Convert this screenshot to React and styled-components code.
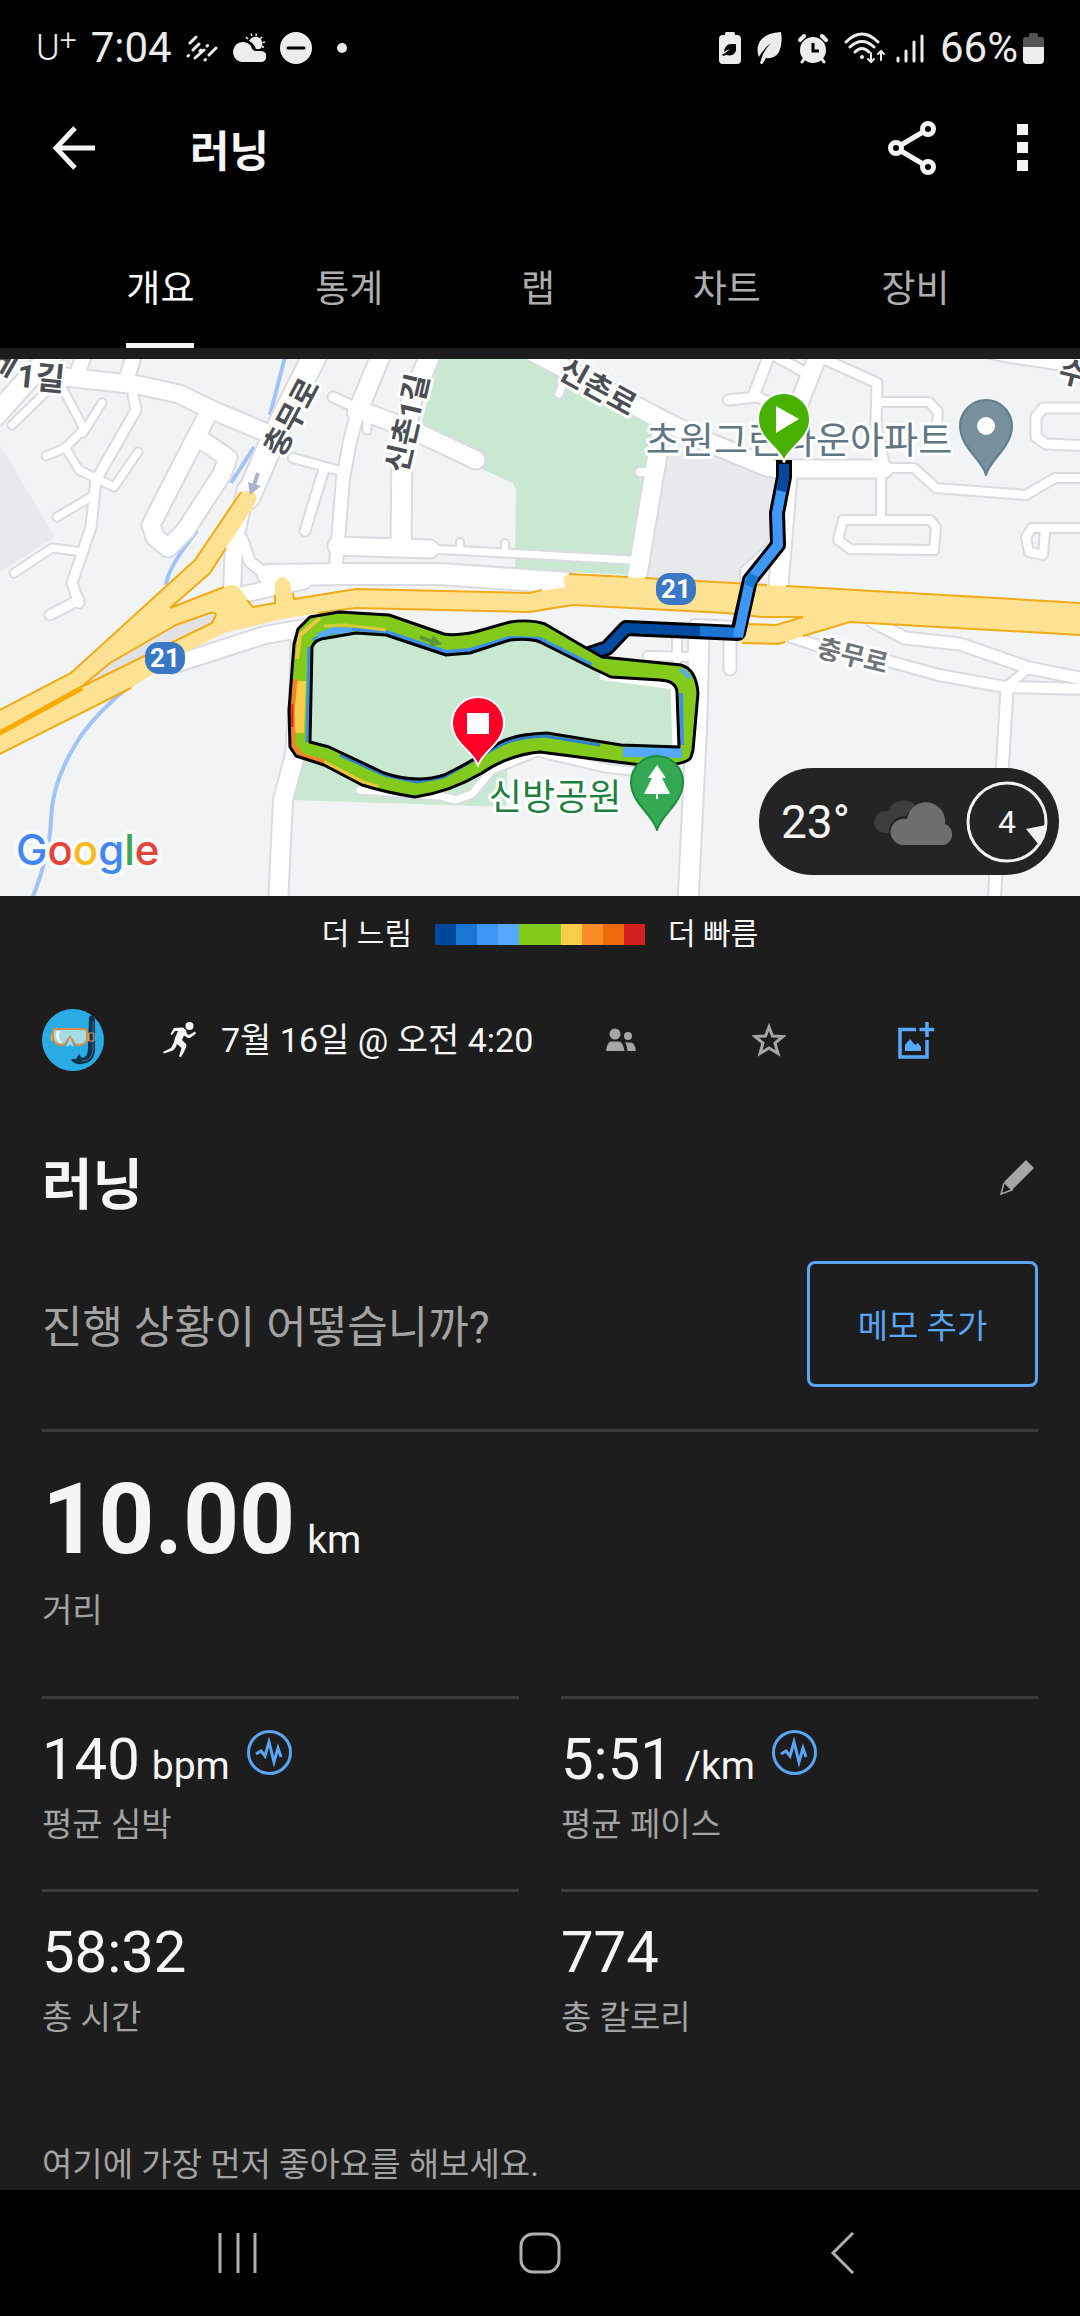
import styled, { createGlobalStyle } from 'styled-components'

const GlobalStyle = createGlobalStyle`
* {
  box-sizing: border-box;
}
body {
  margin: 0;
  background: #000;
  color: #f5f5f5;
  font-family: Roboto, 'Noto Sans CJK KR', sans-serif;
}
button {
  background: none;
  border: 0;
  padding: 0;
  color: inherit;
  font: inherit;
  cursor: pointer;
}
h1, h2, p {
  margin: 0;
}
svg {
  display: block;
}
`

const Page = styled.div`
background: #1d1d1d;
`
const Header = styled.header`
background: #000;
margin-bottom: 11px;
`
const StatusBar = styled.div`
display: flex;
align-items: center;
justify-content: space-between;
height: 96px;
padding: 0 36px;
color: #ececec;
`
const StatusGroup = styled.div`
display: flex;
align-items: center;
gap: ${({ $gap }) => $gap}px;
`
const Carrier = styled.span`
font-size: 36px;
font-weight: 300;
line-height: 44px;
& sup {
  font-size: 30px;
  line-height: 0;
  vertical-align: 10px;
}
`
const StatusText = styled.span`
font-size: 42px;
line-height: 44px;
`

const AppBar = styled.div`
display: flex;
align-items: center;
height: 104px;
padding: 0 42px;
`
const IconButton = styled.button`
display: flex;
align-items: center;
justify-content: center;
width: 64px;
height: 64px;
color: ${({ $color }) => $color || '#f5f5f5'};
`
const AppTitle = styled.h1`
flex: 1;
margin-left: 84px;
padding-top: 8px;
font-size: 43px;
font-weight: 700;
line-height: 56px;
`
const AppActions = styled.div`
display: flex;
gap: 46px;
margin-right: -16px;
`

const Tabs = styled.div`
display: flex;
align-items: flex-end;
height: 148px;
padding: 0 70px 0 66px;
`
const TabCell = styled.div`
flex: 1;
display: flex;
justify-content: center;
`
const Tab = styled.button`
padding-bottom: 28px;
border-bottom: 5px solid ${({ $active }) => ($active ? '#f5f5f5' : 'transparent')};
color: ${({ $active }) => ($active ? '#ffffff' : '#aeaeae')};
font-size: 37px;
line-height: 50px;
`

const MapBox = styled.section`
position: relative;
& > svg {
  width: 100%;
  height: auto;
}
`
const Weather = styled.div`
position: absolute;
right: 21px;
bottom: 21px;
display: flex;
align-items: center;
width: 300px;
height: 107px;
padding: 0 11px 0 22px;
border-radius: 54px;
background: #242424;
`
const Temperature = styled.span`
flex: 1;
font-size: 46px;
line-height: 56px;
`

const Legend = styled.div`
display: flex;
align-items: center;
justify-content: center;
gap: 23px;
height: 76px;
font-size: 30px;
line-height: 40px;
`
const Scale = styled.div`
display: flex;
`
const Swatch = styled.i`
width: 21px;
height: 21px;
background: ${({ $color }) => $color};
`

const Meta = styled.div`
display: flex;
align-items: center;
height: 136px;
padding: 0 90px 0 42px;
`
const Runner = styled.span`
margin: 0 24px 0 59px;
`
const DateText = styled.span`
font-size: 34px;
line-height: 44px;
white-space: nowrap;
`
const MetaActions = styled.div`
display: flex;
flex: 1;
justify-content: space-around;
margin-left: 14px;
`

const TitleRow = styled.div`
display: flex;
align-items: center;
justify-content: space-between;
height: 140px;
padding: 0 31px 0 42px;
`
const Title = styled.h2`
padding-top: 14px;
font-size: 55px;
font-weight: 700;
line-height: 64px;
`
const NoteRow = styled.div`
display: flex;
align-items: center;
justify-content: space-between;
padding: 13px 42px 42px;
`
const Question = styled.p`
padding-top: 8px;
color: #a3a3a3;
font-size: 44px;
line-height: 56px;
`
const NoteButton = styled.button`
width: 231px;
height: 126px;
border: 3px solid #5aa5f5;
border-radius: 8px;
color: #5aa5f5;
font-size: 33px;
`

const Stats = styled.section`
display: grid;
grid-template-columns: 1fr 1fr;
column-gap: 42px;
padding: 0 42px;
`
const Stat = styled.div`
grid-column: ${({ $wide }) => ($wide ? '1 / -1' : 'auto')};
padding: ${({ $wide }) => ($wide ? '28px 0 63px' : '25px 0 42px')};
border-top: 3px solid #3d3d3d;
`
const Value = styled.div`
display: flex;
align-items: baseline;
gap: 12px;
height: ${({ $wide }) => ($wide ? 120 : 70)}px;
font-size: ${({ $wide }) => ($wide ? 98 : 58)}px;
font-weight: ${({ $wide }) => ($wide ? 700 : 400)};
line-height: ${({ $wide }) => ($wide ? 120 : 70)}px;
`
const Unit = styled.span`
font-size: 39px;
font-weight: 400;
line-height: 48px;
`
const ChartButton = styled.button`
align-self: flex-start;
margin: 6px 0 0 5px;
color: #5aa5f5;
`
const Label = styled.div`
margin-top: 9px;
color: #a3a3a3;
font-size: 33px;
line-height: 44px;
`
const LikeHint = styled.p`
padding: 61px 42px 3px;
color: #a3a3a3;
font-size: 33px;
line-height: 44px;
`

const NavBar = styled.nav`
display: flex;
align-items: center;
height: 126px;
padding: 0 87px;
background: #000;
`
const NavButton = styled.button`
display: flex;
flex: 1;
justify-content: center;
color: #b0b0b0;
`

const tabs = ['개요', '통계', '랩', '차트', '장비']

const scale = [
  '#00489c', '#1976d2', '#3f97f5', '#56a9ff', '#82cb1d',
  '#82cb1d', '#fbcb4a', '#fb8c26', '#ec6a0e', '#d32121'
]

const stats = [
  { value: '10.00', unit: 'km', label: '거리', wide: true },
  { value: '140', unit: 'bpm', label: '평균 심박', chart: true },
  { value: '5:51', unit: '/km', label: '평균 페이스', chart: true },
  { value: '58:32', label: '총 시간' },
  { value: '774', label: '총 칼로리' }
]

// [width, path]
const roads = [
  [17, 'M65 18 L138 26 L179 35 L210 50 L262 72'],
  [20, 'M56 -8 L30 18 L-6 58'],
  [7, 'M45 34 L12 66'],
  [14, 'M84 -4 L76 18'],
  [14, 'M134 -4 L126 22'],
  [23, 'M316 -6 L284 58 L268 92 L248 138'],
  [16, 'M246 130 L234 184 L232 232'],
  [10, 'M242 180 L250 203 L264 214 L300 216'],
  [20, 'M268 216 L344 215 L440 215 L540 222 L570 224'],
  [15, 'M241 236 L304 222'],
  [17, 'M208 55 L196 78 L151 166 L155 178 L168 189 L185 172 L222 115 L228 99 L203 82'],
  [7, 'M62 28 L84 70 L65 89 L46 97'],
  [7, 'M102 44 L83 74'],
  [9, 'M133 36 L136 51 L96 121 L91 168 L72 224 L79 244'],
  [7, 'M65 88 L79 111 L114 128 L138 93'],
  [7, 'M91 138 L57 158'],
  [7, 'M83 193 L52 189 L14 214'],
  [9, 'M79 241 L50 256'],
  [18, 'M381 -4 L357 54'],
  [12, 'M357 56 L350 82 L343 120 L336 206'],
  [9, 'M333 38 L368 54'],
  [17, 'M362 52 L410 70 L476 101'],
  [19, 'M430 -4 L412 40 L402 90 L401 188'],
  [7, 'M367 60 L367 71'],
  [8, 'M293 99 L344 113'],
  [9, 'M324 110 L305 172'],
  [17, 'M337 187 L430 190'],
  [7, 'M430 190 L540 196 L630 201'],
  [6, 'M460 183 L460 192'],
  [6, 'M505 184 L505 193'],
  [18, 'M516 -16 L600 28 L660 60 L700 80 L768 108'],
  [17, 'M775 110 L884 110'],
  [8, 'M884 109 L914 109 L936 129 L1026 136 L1055 119 L1090 119'],
  [7, 'M559 35 L567 14'],
  [8, 'M640 113 L655 113'],
  [18, 'M660 80 L636 224'],
  [18, 'M788 112 L778 232'],
  [8, 'M746 230 L745 212 L778 182'],
  [17, 'M819 -6 L793 60'],
  [10, 'M770 -6 L754 36'],
  [9, 'M728 41 L757 38 L776 46'],
  [9, 'M774 -4 L804 13'],
  [9, 'M824 0 L877 24 L876 64 L884 105'],
  [8, 'M877 43 L929 43 L938 53 L936 76'],
  [8, 'M881 112 L881 161'],
  [8, 'M843 161 L930 161 L936 168 L934 191 L850 190 L838 181 Z'],
  [9, 'M1090 49 L1043 49 L1036 58 L1036 78 L1046 85 L1090 87'],
  [14, 'M950 -16 L1010 -4 L1090 8'],
  [8, 'M1090 169 L1032 169 L1026 178 L1029 193 L1043 196 L1045 171'],
  [10, 'M780 274 L822 288 L884 301 L939 316 L1005 328 L1090 330'],
  [11, 'M872 262 L905 279 L960 285 L1029 309 L1090 321'],
  [8, 'M1028 310 L1008 326'],
  [11, 'M1007 331 L994 545'],
  [10, 'M695 266 L735 268'],
  [8, 'M677 274 L677 300'],
  [8, 'M648 297 L692 298'],
  [11, 'M730 276 L730 310'],
  [19, 'M699 272 L697 358 L688 545'],
  [7, 'M360 431 L440 437 L456 441 L472 435 L492 411 L537 393 L605 409 L640 413'],
  [18, 'M301 272 L299 340 L295 396 L283 441 L278 545'],
  [16, 'M172 306 L265 276 L345 262']
]

const loopOuter =
  'M339 253 L310 258 L298 270 L294 285 L289 351 L290 388 L296 397 L324 406 L362 426 Q388 434 415 438 Q450 433 482 414 Q508 396 540 393 L617 403 L650 407 Q688 406 691 398 L693 391 L698 334 Q696 310 681 306 L602 298 L581 286 L545 265 Q530 260 510 263 L475 273 Q455 277 444 275 L389 256 Z'
const loopInner =
  'M312 288 Q315 280 327 279 L356 274 L386 276 L446 296 L470 294 L510 281 Q530 279 540 283 L592 309 L611 318 L660 321 Q677 322 677 334 L679 388 L621 386 L547 374 Q515 375 499 384 Q470 404 444 416 Q417 425 384 414 L329 388 L310 383 Z'

const streams = [
  'M285 -2 L270 56',
  'M254 88 L231 124',
  'M197 172 Q168 208 166 226',
  'M127 329 Q88 362 74 388 Q52 425 51 460 Q50 495 32 540'
]

const highway =
  'M-2 352 L71 314 L195 201 L241 133 Q256 129 257 140 L251 151 L226 189 L210 214 L167 251 L224 228 Q236 222 243 234 L253 248 L275 244 L275 224 Q282 212 290 224 L293 240 L356 230 L530 234 L540 232 L566 228 Q560 218 569 215 L767 226 L1082 244 L1082 276 L850 263 L778 285 L740 284 L742 266 L776 266 L803 258 L760 257 L726 254 L573 246 L530 253 L356 249 L286 259 L224 274 L186 293 L131 329 L-2 396 Z'
const highwayEdges =
  'M-2 352 L71 314 L195 201 L241 133 M226 189 L210 214 L170 249 L224 228 M247 241 L253 248 L275 244 L275 236 M293 234 L294 240 L356 230 L530 234 L542 231 M318 254 L356 249 L530 253 L573 246 L726 254 L762 258 L803 258 L776 266 L744 265 M569 215 L628 218 M645 219 L767 226 M786 227 L1082 244 M742 284 L778 285 L785 283 M803 277 L850 263 L1082 276 M-2 396 L131 329'

const Pin = ({ x, y, tip, fill, stroke, width = 2, children }) => (
  <g transform={`translate(${x} ${y})`}>
    <path
      d={`M0 ${tip} C-3 ${tip - 14} -26 21 -26 0 A26 26 0 0 1 26 0 C26 21 3 ${tip - 14} 0 ${tip} Z`}
      fill={fill}
      stroke={stroke}
      strokeWidth={width}
      strokeLinejoin='round'
    />
    {children}
  </g>
)

const RouteShield = ({ x, y }) => (
  <g>
    <rect x={x - 20} y={y - 16} width='40' height='32' rx='14' fill='#3a78c6' />
    <text x={x} y={y + 9} textAnchor='middle' fontSize='26' fontWeight='700' fill='#fff'>21</text>
  </g>
)

const MapLabel = ({ x, y, size = 30, angle = 0, color = '#4b4f55', weight = 700, children }) => (
  <text
    transform={`translate(${x} ${y}) rotate(${angle})`}
    textAnchor='middle'
    dy={Math.round(size * 0.37)}
    fontSize={size}
    fontWeight={weight}
    fill={color}
    stroke='#ffffff'
    strokeWidth='6'
    strokeLinejoin='round'
    paintOrder='stroke'
  >
    {children}
  </text>
)

const RouteMap = () => (
  <svg viewBox='0 0 1080 537' role='img' aria-label='지도'>
    <rect width='1080' height='537' fill='#f1f3f5' />
    <path d='M0 86 L55 178 L0 213 Z' fill='#e8e9ed' />
    <path d='M667 98 L700 84 L760 106 L780 131 L778 188 L742 213 L742 226 L645 220 Z' fill='#e8e9ed' />
    <path d='M439 0 L527 0 L654 63 L630 216 L515 210 L516 131 L513 124 L484 111 L420 70 Z' fill='#c9e8d2' />
    <path d='M300 395 L294 441 L506 448 L508 400 Z' fill='#c9e8d2' />
    <g fill='none' stroke='#a0c3f8' strokeWidth='4'>
      {streams.map((d, k) => <path key={k} d={d} />)}
    </g>
    <g fill='none' strokeLinecap='round' strokeLinejoin='round'>
      {roads.map(([w, d], k) => <path key={k} d={d} stroke='#dadbe0' strokeWidth={w + 4} />)}
      {roads.map(([w, d], k) => <path key={k} d={d} stroke='#ffffff' strokeWidth={w} />)}
    </g>
    <path d={highway} fill='#fde293' />
    <path d={highwayEdges} fill='none' stroke='#f2ab17' strokeWidth='2' />
    <path
      d='M81 328 L110 304 L176 266 L210 254 Q218 253 215 258 L212 264 Z'
      fill='#e2e2e2'
      stroke='#f2ab17'
      strokeWidth='2'
    />
    <path d='M-2 375 L82 329' stroke='#f9ab00' strokeWidth='5' />
    <path d='M258 114 L254 126' stroke='#adb3cc' strokeWidth='4' />
    <path d='M248 123 L261 127 L250 136 Z' fill='#adb3cc' />

    <path d={loopInner} fill='#c9e8d2' />
    <path d='M600 317 L674 327 L676 388' fill='none' stroke='#ffffff' strokeWidth='7' />

    <MapLabel x={799} y={81} size={37} color='#5f7683' weight={400}>초원그린타운아파트</MapLabel>
    <MapLabel x={555} y={438} size={36} color='#1e8040' weight={400}>신방공원</MapLabel>
    <MapLabel x={853} y={296} size={26} angle={14} color='#70757a'>충무로</MapLabel>
    <MapLabel x={291} y={58} angle={-62}>충무로</MapLabel>
    <MapLabel x={407} y={64} angle={-77}>신촌1길</MapLabel>
    <MapLabel x={598} y={28} angle={29}>신촌로</MapLabel>
    <MapLabel x={41} y={18} size={32} angle={6}>1길</MapLabel>
    <MapLabel x={4} y={2} angle={30}>게</MapLabel>
    <MapLabel x={1073} y={14} angle={14}>수</MapLabel>
    <RouteShield x={676} y={230} />
    <RouteShield x={165} y={299} />

    <g fill='none' strokeLinejoin='round'>
      <path
        d='M784 101 L784 118 L777 154 L778 186 L750 221 L738 274 L626 269 L607 289 L580 298'
        stroke='#000'
        strokeWidth='16'
      />
      <g strokeWidth='10'>
        <path d='M738 274 L626 269 L607 289 L580 298' stroke='#004a9f' />
        <path d='M740 274 L700 272' stroke='#1976d2' />
        <path d='M784 118 L777 154 L778 186 L750 221 L738 278' stroke='#3f97f5' />
        <path d='M754 216 L749 227' stroke='#1976d2' />
        <path d='M784 105 L784 118 L781 132' stroke='#004a9f' />
      </g>
    </g>
    <path d={`${loopOuter} ${loopInner}`} fill='#82cb1d' fillRule='evenodd' />
    <g fill='none' strokeLinejoin='round'>
      <path d='M313 281 L330 274 L356 270 L386 273 L446 293 L470 291 L510 279 L540 280 L592 306' stroke='#3f8fe8' strokeWidth='4' />
      <path d='M318 277 L334 271 L352 272' stroke='#56a9ff' strokeWidth='6' />
      <path d='M309 288 L307 383' stroke='#3f8fe8' strokeWidth='3' />
      <path d='M324 267 L345 266 L386 271' stroke='#d8cb3a' strokeWidth='3' />
      <path d='M297 300 L300 276 L320 259' stroke='#f0c545' strokeWidth='4' />
      <path d='M301 322 L299 374' stroke='#fbcb4a' strokeWidth='10' />
      <path d='M295 320 L292 352 L293 386 L302 397 L324 403' stroke='#f5812a' strokeWidth='5' />
      <path d='M292 345 L292 368' stroke='#d9341f' strokeWidth='3' />
      <path d='M324 403 L362 423 L378 428' stroke='#ecc53c' strokeWidth='4' />
      <path d='M340 396 L384 416 L417 423 L444 418 L499 387 Q515 378 545 377 L600 386' stroke='#2f7fcb' strokeWidth='3' />
      <path d='M681 334 L682 386' stroke='#3f8fe8' strokeWidth='4' />
      <path d='M681 310 L690 319' stroke='#56a9ff' strokeWidth='4' />
      <path d='M623 393 L682 394' stroke='#56a9ff' strokeWidth='10' />
    </g>
    <path d={`${loopOuter} ${loopInner}`} fill='none' stroke='#000' strokeWidth='3' strokeLinejoin='round' />
    <path d='M420 278 L433 283' stroke='#5c9437' strokeWidth='4' />
    <path d='M433 276 L442 285 L429 288 Z' fill='#5c9437' />

    <Pin x={784} y={60} tip={43} fill='#48b000' stroke='#ffffff'>
      <path d='M-8 -13 L15 0 L-8 14 Z' fill='#fff' />
    </Pin>
    <Pin x={478} y={364} tip={43} fill='#ff0029' stroke='#ffffff'>
      <rect x='-11' y='-10' width='22' height='21' fill='#fff' />
    </Pin>
    <Pin x={986} y={67} tip={49} fill='#788f9c' stroke='#5f7d8b'>
      <circle r='9' fill='#fff' />
    </Pin>
    <Pin x={657} y={423} tip={48} fill='#34a853' stroke='#1e8e3e'>
      <path d='M0 -17 L9 -4 L5 -4 L13 12 L1 12 L1 17 L-1 17 L-1 12 L-13 12 L-5 -4 L-9 -4 Z' fill='#fff' />
    </Pin>

    <text
      x='16'
      y='506'
      fontFamily='Inter, sans-serif'
      fontSize='42'
      fontWeight='500'
      stroke='#f8f9fa'
      strokeWidth='8'
      strokeLinejoin='round'
      paintOrder='stroke'
    >
      <tspan fill='#4285f4'>G</tspan>
      <tspan fill='#e2453a'>o</tspan>
      <tspan fill='#f6bb16'>o</tspan>
      <tspan fill='#4285f4'>g</tspan>
      <tspan fill='#3aa757'>l</tspan>
      <tspan fill='#e2453a'>e</tspan>
    </text>
  </svg>
)

const Clouds = () => (
  <svg width='82' height='46' viewBox='0 0 82 46'>
    <path d='M12 34 A11 11 0 0 1 12 12 L15 12 A17 17 0 0 1 44 8 Q36 10 33 17 Q20 17 16 30 L16 34 Z' fill='#3d3d3d' />
    <path d='M28 46 A13 13 0 1 1 34 20 A19 19 0 0 1 72 25 A11 11 0 0 1 71 46 Z' fill='#6e6e6e' />
  </svg>
)

const Wind = () => (
  <svg width='82' height='82' viewBox='0 0 82 82'>
    <circle cx='41' cy='41' r='39' fill='none' stroke='#f2f2f2' strokeWidth='3' />
    <path d='M60 48 L80 44 L73 64 Z' fill='#f2f2f2' />
    <text x='41' y='52' textAnchor='middle' fontSize='32' fill='#f5f5f5'>4</text>
  </svg>
)

const RainIcon = () => (
  <svg width='32' height='32' viewBox='0 0 32 32' fill='none' stroke='currentColor' strokeWidth='3' strokeLinecap='round'>
    <path d='M4 11 L10 5 M7 18 L13 12 M2 24 L2.500 23.500 M9 26 L18 18 M21 14 L21.500 13.500 M14 19 L15 18 M19 28 L19.500 27.500 M23 23 L30 16' />
  </svg>
)

const PartlyCloudyIcon = () => (
  <svg width='34' height='32' viewBox='0 0 34 32' fill='currentColor'>
    <path d='M10 30 A10 10 0 1 1 19 14 Q20 19 24 19 L29 19 A5.500 5.500 0 0 1 29 30 Z' />
    <path d='M17 9 A7 7 0 1 1 28 17 L24 17 Q22 11 17 9 Z' />
    <path d='M14 5 L16 7 M19 1.500 L20 4 M24.500 1.500 L24 4 M30 5 L28 7 M33 10 L30.500 10.500 M32 15.500 L30 14.500' stroke='currentColor' strokeWidth='1.500' />
  </svg>
)

const DndIcon = () => (
  <svg width='32' height='32' viewBox='0 0 32 32'>
    <circle cx='16' cy='16' r='16' fill='currentColor' />
    <path d='M8 16 L24 16' stroke='#000' strokeWidth='3' strokeLinecap='round' />
  </svg>
)

const DotIcon = () => (
  <svg width='32' height='32' viewBox='0 0 32 32'>
    <circle cx='16' cy='16' r='5' fill='currentColor' />
  </svg>
)

const BatteryLeafIcon = () => (
  <svg width='22' height='32' viewBox='0 0 22 32'>
    <path d='M7 0 H15 Q16 0 16 3 H18 Q22 3 22 7 V28 Q22 32 18 32 H4 Q0 32 0 28 V7 Q0 3 4 3 H6 Q6 0 7 0 Z' fill='currentColor' />
    <path d='M17 12 V18 Q16 25 7 23 L4 24 L3 22 Q5 23 11 17 Q6 19 5 20 Q6 12 12 12 Z' fill='#000' />
  </svg>
)

const LeafIcon = () => (
  <svg width='25' height='32' viewBox='0 0 25 32'>
    <path d='M24 0 Q26 12 22 20 Q18 27 9 26 L6 31 Q5 33 3 31 L6 22 Q10 15 14 11 Q7 16 2 25 Q-1 18 2 11 Q7 1 24 0 Z' fill='currentColor' />
  </svg>
)

const AlarmIcon = () => (
  <svg width='30' height='31' viewBox='0 0 30 31' fill='none' stroke='currentColor' strokeLinecap='round'>
    <circle cx='15' cy='17' r='13' fill='currentColor' stroke='none' />
    <path d='M2 7 L6 3 M28 7 L24 3' strokeWidth='4' />
    <path d='M6 26 L4 29 M24 26 L26 29' strokeWidth='3' />
    <path d='M15 10 V18 H21' stroke='#000' strokeWidth='3' strokeLinecap='butt' />
  </svg>
)

const WifiIcon = () => (
  <svg width='42' height='32' viewBox='0 0 42 32' fill='none' stroke='currentColor' strokeWidth='3' strokeLinecap='round'>
    <path d='M2 10 Q18 -6 34 10 M6 15 Q18 4 30 15 M11 20 Q18 13 25 20' />
    <circle cx='18' cy='25' r='2' fill='currentColor' stroke='none' />
    <path d='M27 21 V30 M24 27 L27 30 L30 27 M37 28 V19 M34 22 L37 19 L40 22' strokeWidth='2' />
  </svg>
)

const SignalIcon = () => (
  <svg width='28' height='31' viewBox='0 0 28 31' stroke='currentColor' strokeWidth='3' strokeLinecap='round'>
    <path d='M2 25 V28 M10 18 V28 M18 9 V28 M26 3 V28' />
  </svg>
)

const BatteryIcon = () => (
  <svg width='21' height='31' viewBox='0 0 21 31'>
    <path d='M0 14 V6 Q0 4 2 4 H6 V2 Q6 0 8 0 H13 Q15 0 15 2 V4 H19 Q21 4 21 6 V14 Z' fill='#545454' />
    <path d='M0 14 H21 V27 Q21 31 17 31 H4 Q0 31 0 27 Z' fill='currentColor' />
  </svg>
)

const BackArrowIcon = () => (
  <svg width='44' height='44' viewBox='0 0 44 44' fill='none' stroke='currentColor' strokeWidth='5'>
    <path d='M43 22 H5 M23 2 L4 22 L23 42' />
  </svg>
)

const ShareIcon = () => (
  <svg width='48' height='54' viewBox='0 0 48 54' fill='none' stroke='currentColor' strokeWidth='5'>
    <circle cx='8' cy='27' r='5.500' />
    <circle cx='40' cy='8' r='5.500' />
    <circle cx='40' cy='46' r='5.500' />
    <path d='M13 24 L35 11 M13 30 L35 43' />
  </svg>
)

const MoreIcon = () => (
  <svg width='11' height='48' viewBox='0 0 11 48' fill='currentColor'>
    <path d='M0 0 H11 V11 H0 Z M0 18 H11 V29 H0 Z M0 36 H11 V47 H0 Z' />
  </svg>
)

const Avatar = () => (
  <svg width='62' height='62' viewBox='0 0 62 62'>
    <circle cx='31' cy='31' r='31' fill='#2aabe4' />
    <path d='M47 8 Q50 4 53 10 V41 Q52 54 40 55 Q31 56 29 50 L34 50 L37 45 L40 49 Q46 48 46 39 Z' fill='#0d3350' />
    <path d='M51 12 V41 Q50 52 40 52' fill='none' stroke='#4f7288' strokeWidth='1' />
    <path d='M9 25 H12 V32 H9 Z M44 24 H47 V32 H44 Z' fill='#f5a623' />
    <path d='M47 24 H52 V32 H47 Z' fill='none' stroke='#e8954a' strokeWidth='1' />
    <path d='M13 20 H42 Q45 20 45 24 V30 Q44 36 37 36 Q32 36 31 32 L28 28 L25 32 Q24 36 19 36 Q12 35 11 29 V24 Q11 20 13 20 Z' fill='#a3dbe6' stroke='#d98c45' strokeWidth='2' />
    <path d='M15 22 Q12 28 18 34 L20 34 Q15 28 18 22 Z' fill='#fff' />
    <path d='M28 28 L32 38 L28 36 L24 38 Z' fill='#9fd6f5' />
  </svg>
)

const RunnerIcon = () => (
  <svg width='34' height='36' viewBox='0 0 34 36' fill='currentColor'>
    <circle cx='26.500' cy='4' r='4' />
    <path d='M11 6 L20 5.500 L23 8 L24 12 L26 13 L32 9.500 L33 11.500 L27 16 L25 16 L21 13.500 L19 18 L23 22 L23.500 24 L21 30 L18 35 L16 34.500 L18.500 26 L14 22 L13 25 L10 28.500 L1 31.500 L0 30 L8 26 L11 20 L12 16 L15 9 L12 9 L9 13 L7.500 12 Z' />
  </svg>
)

const PeopleIcon = () => (
  <svg width='30' height='24' viewBox='0 0 30 24' fill='currentColor'>
    <circle cx='9' cy='6' r='5.500' />
    <circle cx='22' cy='8' r='4' />
    <path d='M0 23 Q1 14 5 13.500 H13 Q17 14 18.500 23 Z M19 14.500 H25 Q29 15 30 23 H21.500 Q21 17 19 14.500 Z' />
  </svg>
)

const StarIcon = () => (
  <svg width='34' height='34' viewBox='0 0 34 34' fill='none' stroke='currentColor' strokeWidth='3'>
    <path d='M17 4 L20.500 13 L31 13.500 L23 20 L26 30.500 L17 25 L8 30.500 L11 20 L3 13.500 L13.500 13 Z' />
  </svg>
)

const AddImageIcon = () => (
  <svg width='36' height='37' viewBox='0 0 36 37'>
    <path d='M18 7.500 H2 V35 H29 V18 M29 0 V15 M21.500 7.500 H36' fill='none' stroke='currentColor' strokeWidth='3.500' />
    <path d='M7 29 V23 L12 17 L17 23 L20 21 L23 25 V29 Z' fill='currentColor' />
  </svg>
)

const PencilIcon = () => (
  <svg width='36' height='36' viewBox='0 0 36 36'>
    <path d='M27 0 L35 8 L13 30 L5 22 Z' fill='currentColor' />
    <path d='M5 23 L2 34 L13 30 L6 23' fill='none' stroke='currentColor' strokeWidth='1.500' />
  </svg>
)

const PulseIcon = () => (
  <svg width='45' height='45' viewBox='0 0 45 45' fill='none' stroke='currentColor' strokeWidth='3'>
    <circle cx='22.500' cy='22.500' r='21' />
    <path d='M9 24 L14 21 L18 26 L22 12 L27 32 L31 18 L34 27' />
  </svg>
)

const RecentsIcon = () => (
  <svg width='40' height='42' viewBox='0 0 40 42' stroke='currentColor' strokeWidth='3'>
    <path d='M2 1 V41 M20 1 V41 M37 1 V41' />
  </svg>
)

const HomeIcon = () => (
  <svg width='42' height='42' viewBox='0 0 42 42' fill='none' stroke='currentColor' strokeWidth='3'>
    <rect x='2' y='2' width='38' height='38' rx='12' />
  </svg>
)

const ChevronIcon = () => (
  <svg width='24' height='42' viewBox='0 0 24 42' fill='none' stroke='currentColor' strokeWidth='3'>
    <path d='M23 1 L3 21 L23 41' />
  </svg>
)

const App = () => {
  return (
    <Page>
      <GlobalStyle />
      <Header>
        <StatusBar>
          <StatusGroup $gap={14}>
            <Carrier>U<sup>+</sup></Carrier>
            <StatusText>7:04</StatusText>
            <RainIcon />
            <PartlyCloudyIcon />
            <DndIcon />
            <DotIcon />
          </StatusGroup>
          <StatusGroup $gap={16}>
            <BatteryLeafIcon />
            <LeafIcon />
            <AlarmIcon />
            <StatusGroup $gap={10}>
              <WifiIcon />
              <SignalIcon />
            </StatusGroup>
            <StatusGroup $gap={5}>
              <StatusText>66%</StatusText>
              <BatteryIcon />
            </StatusGroup>
          </StatusGroup>
        </StatusBar>
        <AppBar>
          <IconButton aria-label='뒤로'><BackArrowIcon /></IconButton>
          <AppTitle>러닝</AppTitle>
          <AppActions>
            <IconButton aria-label='공유'><ShareIcon /></IconButton>
            <IconButton aria-label='더보기'><MoreIcon /></IconButton>
          </AppActions>
        </AppBar>
        <Tabs role='tablist'>
          {tabs.map((tab, k) => (
            <TabCell key={tab}>
              <Tab role='tab' aria-selected={k === 0} $active={k === 0}>{tab}</Tab>
            </TabCell>
          ))}
        </Tabs>
      </Header>

      <MapBox>
        <RouteMap />
        <Weather>
          <Temperature>23°</Temperature>
          <StatusGroup $gap={11}>
            <Clouds />
            <Wind />
          </StatusGroup>
        </Weather>
      </MapBox>

      <Legend>
        <span>더 느림</span>
        <Scale>
          {scale.map((color, k) => <Swatch key={k} $color={color} />)}
        </Scale>
        <span>더 빠름</span>
      </Legend>

      <Meta>
        <Avatar />
        <Runner><RunnerIcon /></Runner>
        <DateText>7월 16일 @ 오전 4:20</DateText>
        <MetaActions>
          <IconButton $color='#a6a6a6' aria-label='공개 범위'><PeopleIcon /></IconButton>
          <IconButton $color='#a6a6a6' aria-label='즐겨찾기'><StarIcon /></IconButton>
          <IconButton $color='#56a9ff' aria-label='사진 추가'><AddImageIcon /></IconButton>
        </MetaActions>
      </Meta>

      <TitleRow>
        <Title>러닝</Title>
        <IconButton $color='#a6a6a6' aria-label='편집'><PencilIcon /></IconButton>
      </TitleRow>
      <NoteRow>
        <Question>진행 상황이 어떻습니까?</Question>
        <NoteButton>메모 추가</NoteButton>
      </NoteRow>

      <Stats>
        {stats.map((item) => (
          <Stat key={item.label} $wide={item.wide}>
            <Value $wide={item.wide}>
              {item.value}
              {item.unit && <Unit>{item.unit}</Unit>}
              {item.chart && <ChartButton aria-label={item.label}><PulseIcon /></ChartButton>}
            </Value>
            <Label>{item.label}</Label>
          </Stat>
        ))}
      </Stats>
      <LikeHint>여기에 가장 먼저 좋아요를 해보세요.</LikeHint>

      <NavBar>
        <NavButton aria-label='최근 앱'><RecentsIcon /></NavButton>
        <NavButton aria-label='홈'><HomeIcon /></NavButton>
        <NavButton aria-label='뒤로 가기'><ChevronIcon /></NavButton>
      </NavBar>
    </Page>
  )
}

export default App
